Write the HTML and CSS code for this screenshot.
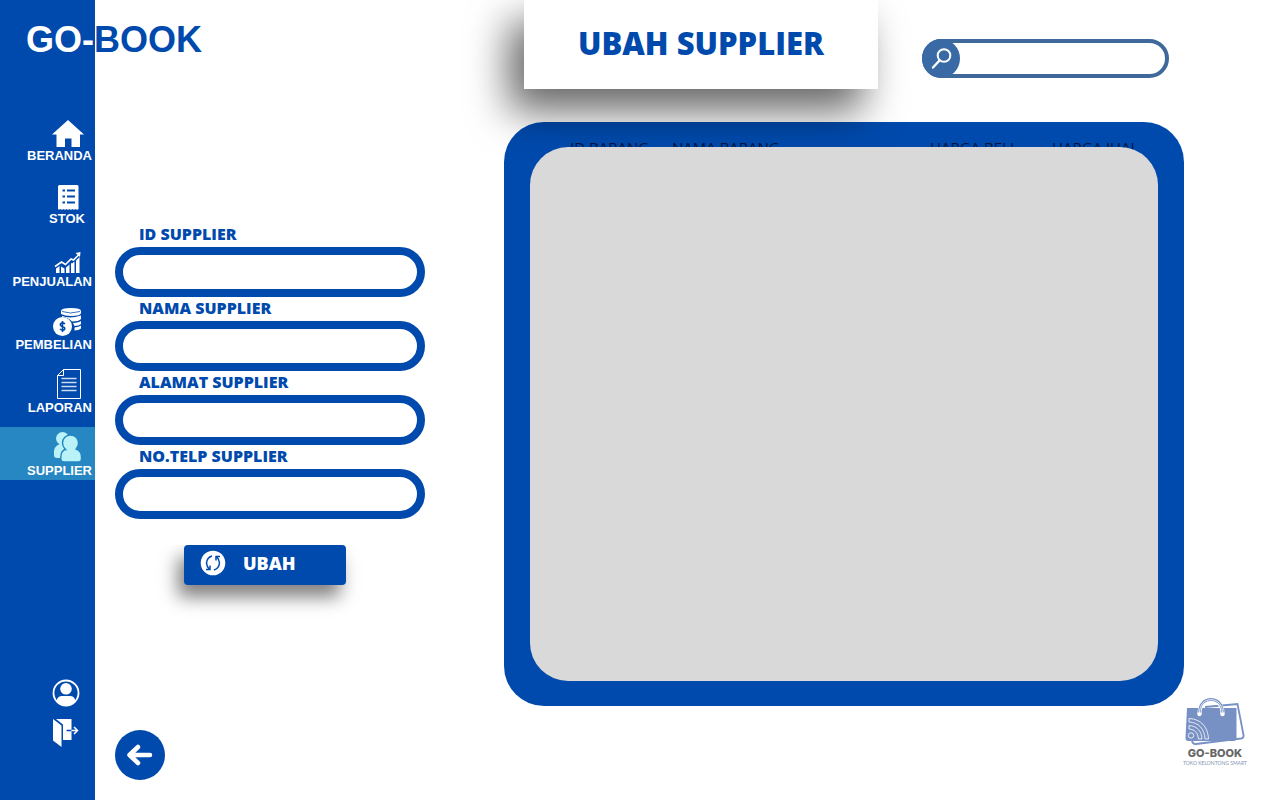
FILE: index.html
```html
<!DOCTYPE html>
<html lang="id">
<head>
<meta charset="utf-8">
<meta name="viewport" content="width=device-width, initial-scale=1">
<title>Ubah Supplier - GO-BOOK</title>
<link rel="stylesheet" href="styles.css">
</head>
<body>
<div class="app">
  <aside class="sidebar">
    <div class="brand">GO-<span class="brand-accent">BOOK</span></div>
    <nav class="nav">
      <a class="nav-item" href="#beranda">
        <svg class="nav-icon" width="32" height="27" viewBox="0 0 32 27" fill="currentColor"><path d="M16 0 32 14.500H28V27H19.500V18.500H13V27H4.500V14.500H0Z"/></svg>
        <span class="nav-label">BERANDA</span>
      </a>
      <a class="nav-item" href="#stok">
        <svg class="nav-icon" width="32" height="25" viewBox="0 0 32 25"><path fill="currentColor" d="M7.500 0H25Q26.500 0 26.500 1.500V24Q25 25.500 23.500 24 22 25.500 20.500 24 19 25.500 17.500 24 16 25.500 14.500 24 13 25.500 11.500 24 10 25.500 8.500 24 7 25 6 24V1.500Q6 0 7.500 0Z"/><path stroke="#004aad" stroke-width="2" d="M10.500 5.500h2.500M15 5.500h8M10.500 11.500h2.500M15 11.500h8M10.500 17.500h2.500M15 17.500h8"/></svg>
        <span class="nav-label">STOK</span>
      </a>
      <a class="nav-item" href="#penjualan">
        <svg class="nav-icon" width="32" height="21" viewBox="0 0 32 21"><path fill="currentColor" d="M4 16.500 7.500 14V21H4ZM9 14.500l3.500 2V21H9ZM14 15.500l3.500-3V21H14ZM19 11l1 .5 2.500-2V21H19ZM24 8.500 27.500 5V21H24Z"/><path fill="none" stroke="currentColor" stroke-width="1.600" d="m3 14.500 6.500-4.500 4 2.500 5.500-5.500 2.500 1L27 2.500"/><path fill="currentColor" d="m23.500 1 5-1-.5 5Z"/></svg>
        <span class="nav-label">PENJUALAN</span>
      </a>
      <a class="nav-item" href="#pembelian">
        <svg class="nav-icon" width="32" height="28" viewBox="0 0 32 28"><g fill="currentColor"><path d="M9 3Q9 0 19 0T29 3V5Q29 8 19 8 13 8 9 6Z"/><path d="M10 8Q18 11 29 7.500V11Q27 13.500 20 13.500 16 9 10 9Z"/><path d="M21 15Q27 14.500 29 13V16Q27 18 22.500 18Z"/><path d="M22.500 19.500Q27 19 29 17.500V20.500Q27 22.500 22.500 22.500Z"/></g><path fill="none" stroke="#004aad" stroke-width=".8" d="M10 3.500Q18 6.500 28 3.500"/><circle cx="10.500" cy="18.500" r="9.500" fill="currentColor"/><path fill="none" stroke="#004aad" stroke-width="1.600" d="M13 15.800Q10.500 14 8.700 15.500 7.500 17.500 10.500 18.500T12.500 21.500Q10.500 23 8 21M10.500 13v11"/></svg>
        <span class="nav-label">PEMBELIAN</span>
      </a>
      <a class="nav-item" href="#laporan">
        <svg class="nav-icon" width="32" height="30" viewBox="0 0 32 30" fill="none" stroke="currentColor"><path d="M11.500.5H28.500V29.500H5.500V6.500ZM11.500.5V6.500H5.500"/><path opacity=".8" stroke-width="1.400" d="M9.500 9.500h15M9.500 13.500h15M9.500 17.500h15M9.500 21.500h15"/></svg>
        <span class="nav-label">LAPORAN</span>
      </a>
      <a class="nav-item nav-item-active" href="#supplier" aria-current="page">
        <svg class="nav-icon" width="32" height="30" viewBox="0 0 32 30"><g fill="#b9f3f8"><circle cx="10.500" cy="6.500" r="6.500"/><path d="M2 23Q1 14 8 12H14V26H5Q2 26 2 23Z"/></g><g fill="#b9f3f8" stroke="#2687c2" stroke-width="1.400"><path d="M8.800 25Q8.800 18 15 16.800H23Q29.500 18 29.500 25V27Q29.500 30 26.500 30H12Q8.800 30 8.800 27Z"/><circle cx="18.500" cy="11" r="8"/></g><path fill="#b9f3f8" d="M14.500 16h9v4h-9Z"/></svg>
        <span class="nav-label">SUPPLIER</span>
      </a>
    </nav>
    <div class="account">
      <a class="account-link" href="#profil" aria-label="Profil"><svg width="28" height="28" viewBox="0 0 28 28"><circle cx="14" cy="14" r="12.500" fill="none" stroke="currentColor" stroke-width="1.800"/><circle cx="14" cy="9.800" r="5.800" fill="currentColor"/><path fill="currentColor" d="M4.500 22Q5.500 17 10 17H18Q22.500 17 23.500 22 19.500 26.500 14 26.500T4.500 22Z"/></svg></a>
      <a class="account-link" href="#keluar" aria-label="Keluar"><svg width="28" height="28" viewBox="0 0 28 28"><path fill="currentColor" d="M1 0 9.500 6.500V28L1 21.500ZM4 0H19.500V21H11V5.500Z"/><path fill="none" stroke="#004aad" stroke-width="1.500" d="M14.500 11.500h5"/><path fill="none" stroke="currentColor" stroke-width="1.500" d="M19.500 11.500h6M22 8l3.500 3.500L22 15"/></svg></a>
    </div>
  </aside>

  <main class="main">
    <header class="topbar">
      <h1 class="title">UBAH SUPPLIER</h1>
      <form class="search" role="search">
        <button class="search-button" type="submit" aria-label="Cari"><svg width="24" height="24" viewBox="0 0 24 24" fill="none" stroke="#fff" stroke-width="2"><circle cx="15" cy="8.500" r="6.300"/><path stroke-width="2.400" stroke-linecap="round" d="m10.500 13.500-6.500 7"/></svg></button>
        <input class="search-input" type="search" aria-label="Cari supplier">
      </form>
    </header>

    <form class="form">
      <div class="field"><label class="field-label" for="id">ID SUPPLIER</label><input class="field-input" id="id" type="text"></div>
      <div class="field"><label class="field-label" for="nama">NAMA SUPPLIER</label><input class="field-input" id="nama" type="text"></div>
      <div class="field"><label class="field-label" for="alamat">ALAMAT SUPPLIER</label><input class="field-input" id="alamat" type="text"></div>
      <div class="field"><label class="field-label" for="telp">NO.TELP SUPPLIER</label><input class="field-input" id="telp" type="tel"></div>
      <button class="submit" type="submit">
        <svg width="26" height="26" viewBox="0 0 26 26"><circle cx="13" cy="13" r="12.300" fill="#fff"/><g fill="none" stroke="#004aad" stroke-width="1.500"><path d="M12 6Q7 7.500 6.500 13 6.700 16.500 9.500 19.500M14 20Q19 18.500 19.500 13 19.300 9.500 16.500 6.500"/><path d="M6 19.500h4V15.500M20 6.500h-4V10.500"/></g></svg>
        UBAH
      </button>
    </form>

    <section class="panel">
      <table class="table">
        <thead><tr><th class="col-id">ID BARANG</th><th class="col-name">NAMA BARANG</th><th class="col-buy">HARGA BELI</th><th>HARGA JUAL</th></tr></thead>
      </table>
      <div class="canvas"></div>
    </section>

    <a class="back" href="#kembali" aria-label="Kembali"><svg width="50" height="50" viewBox="0 0 50 50" fill="none" stroke="#fff" stroke-width="4.500" stroke-linecap="round" stroke-linejoin="round"><path d="M35 25H15M23 17l-8.500 8L23 33"/></svg></a>

    <div class="stamp">
      <svg width="60" height="48" viewBox="0 0 60 48"><path fill="none" stroke="#7891c4" stroke-width="1.800" d="M20 9 52.500 6 58.500 37Q59 40 56 40.500L11 46Q8 46.500 7 43"/><path fill="#7891c4" d="M2 10H51.500V40Q51.500 43 48.500 43H3.500Q.5 43 .5 40Z"/><g fill="#fff"><circle cx="14.500" cy="16" r="2.200"/><circle cx="37.500" cy="16" r="2.200"/></g><path fill="none" stroke="#fff" stroke-width="4" d="M14.500 16C14-3 38-3 37.500 16"/><path fill="none" stroke="#7891c4" stroke-width="2.600" d="M14.500 14.500C14-3 38-3 37.500 14.500"/><path fill="none" stroke="#fff" stroke-width=".8" d="M14.500 15.500C14-3 38-3 37.500 15.500"/><g fill="none" stroke="#fff" stroke-width=".8"><circle cx="6" cy="37.500" r="2.700"/><path d="M4 20.500C16 21 23 29 23.500 41H20C19.500 31 14 24.500 4 24ZM4 27.500C12 28 16.500 33 17 41H13.500C13 35 10 31.500 4 31Z"/></g></svg>
      <div class="stamp-name">GO-BOOK</div>
      <div class="stamp-tagline">TOKO KELONTONG SMART</div>
    </div>
  </main>
</div>
</body>
</html>
```
FILE: styles.css
```css
* { box-sizing: border-box; }

body {
  margin: 0;
  background: #fff;
  color: #004aad;
  font-family: "Open Sans", sans-serif;
}

svg { display: block; flex: none; }
button, input { font: inherit; }

.app {
  display: grid;
  grid-template-columns: 95px minmax(0, 1fr);
  min-height: 100vh;
}

/* Sidebar */
.sidebar {
  display: flex;
  flex-direction: column;
  padding: 18px 0 53px;
  background: #004aad;
  color: #fff;
  font-family: "Liberation Sans", Arial, sans-serif;
  font-weight: 700;
}

.brand {
  position: relative;
  z-index: 3;
  padding-left: 26px;
  font-size: 36px;
  line-height: 44px;
  white-space: nowrap;
}

.brand-accent { color: #004aad; }

.nav {
  display: flex;
  flex-direction: column;
  gap: 10px;
  margin-top: 50px;
}

.nav-item {
  display: flex;
  flex-direction: column;
  align-items: flex-end;
  justify-content: flex-end;
  height: 53px;
  padding-right: 3px;
  color: #fff;
  text-decoration: none;
}

.nav-item-active { background: #2687c2; }
.nav-icon { margin-right: 8px; }

.nav-label {
  min-width: 50px;
  font-size: 13px;
  line-height: 18px;
  text-align: center;
}

.account {
  display: flex;
  flex-direction: column;
  gap: 12px;
  align-items: flex-end;
  margin-top: auto;
  padding-right: 15px;
}

.account-link { color: #fff; }

/* Main area */
.main {
  display: grid;
  grid-template-columns: 310px minmax(0, 1fr) 96px;
  grid-template-rows: auto 1fr auto;
  padding-left: 20px;
}

.topbar {
  grid-column: 2;
  display: flex;
  align-items: flex-start;
  gap: 44px;
  margin: 0 15px 33px 99px;
}

.title {
  position: relative;
  z-index: 1;
  flex: 1 1 354px;
  margin: 0;
  padding: 21px 0 24px;
  background: #fff;
  box-shadow: -15px 22px 40px rgba(0, 0, 0, 0.6);
  font-size: 31px;
  font-weight: 800;
  line-height: 44px;
  text-align: center;
  white-space: nowrap;
}

.search {
  flex: 1 1 247px;
  min-width: 0;
  display: flex;
  height: 39px;
  margin-top: 39px;
  border: 4px solid #40699b;
  border-radius: 20px;
}

.search-button {
  display: grid;
  place-items: center;
  flex: none;
  width: 38px;
  height: 39px;
  margin: -4px 0 -4px -4px;
  padding: 0;
  border: 0;
  border-radius: 50%;
  background: #3a6aa5;
}

.search-input {
  flex: 1;
  min-width: 0;
  padding: 0 12px 0 6px;
  border: 0;
  background: none;
  outline: 0;
}

/* Supplier form */
.form {
  grid-column: 1;
  display: flex;
  flex-direction: column;
  gap: 2px;
  padding-top: 103px;
}

.field { display: flex; flex-direction: column; gap: 4px; }

.field-label {
  padding-left: 24px;
  font-size: 16px;
  font-weight: 800;
  line-height: 18px;
}

.field-input {
  width: 100%;
  height: 50px;
  padding: 0 18px;
  border: 8px solid #004aad;
  border-radius: 25px;
  background: #fff;
  outline: 0;
}

.submit {
  display: flex;
  align-items: center;
  gap: 17px;
  width: 162px;
  height: 40px;
  margin: 24px 0 0 69px;
  padding: 0 16px 4px;
  border: 0;
  border-radius: 4px;
  background: #004aad;
  box-shadow: -6px 12px 18px rgba(0, 0, 0, 0.5);
  clip-path: inset(0 -30px -40px -30px);
  color: #fff;
  font-size: 18px;
  font-weight: 800;
}

/* Table panel */
.panel {
  grid-column: 2;
  display: grid;
  margin-left: 79px;
  padding: 16px 26px 25px;
  border-radius: 40px;
  background: #004aad;
}

.table {
  grid-area: 1 / 1;
  align-self: start;
  width: calc(100% - 40px);
  margin-left: 40px;
  border-collapse: collapse;
  table-layout: fixed;
  color: #03143c;
  font-size: 15px;
  line-height: 18px;
}

.table th {
  padding: 0;
  font-weight: 400;
  text-align: left;
  white-space: nowrap;
}

.col-id { width: 102px; }
.col-name { width: 258px; }
.col-buy { width: 122px; }

.canvas {
  z-index: 2;
  grid-area: 1 / 1;
  margin-top: 9px;
  border-radius: 38px;
  background: #d9d9d9;
}

/* Footer row */
.back {
  grid-area: 3 / 1;
  justify-self: start;
  margin: 24px 0 20px;
  border-radius: 50%;
  background: #004aad;
}

.stamp {
  grid-area: 2 / 3 / 4 / 4;
  align-self: end;
  justify-self: start;
  display: flex;
  flex-direction: column;
  align-items: center;
  width: 62px;
  margin-bottom: 34px;
}

.stamp-name {
  color: #666;
  font-family: Inter, sans-serif;
  font-size: 11px;
  font-weight: 800;
  line-height: 14px;
}

.stamp-tagline {
  color: #8494b4;
  font-family: Lato, sans-serif;
  font-size: 5px;
  line-height: 6px;
  white-space: nowrap;
}
```
